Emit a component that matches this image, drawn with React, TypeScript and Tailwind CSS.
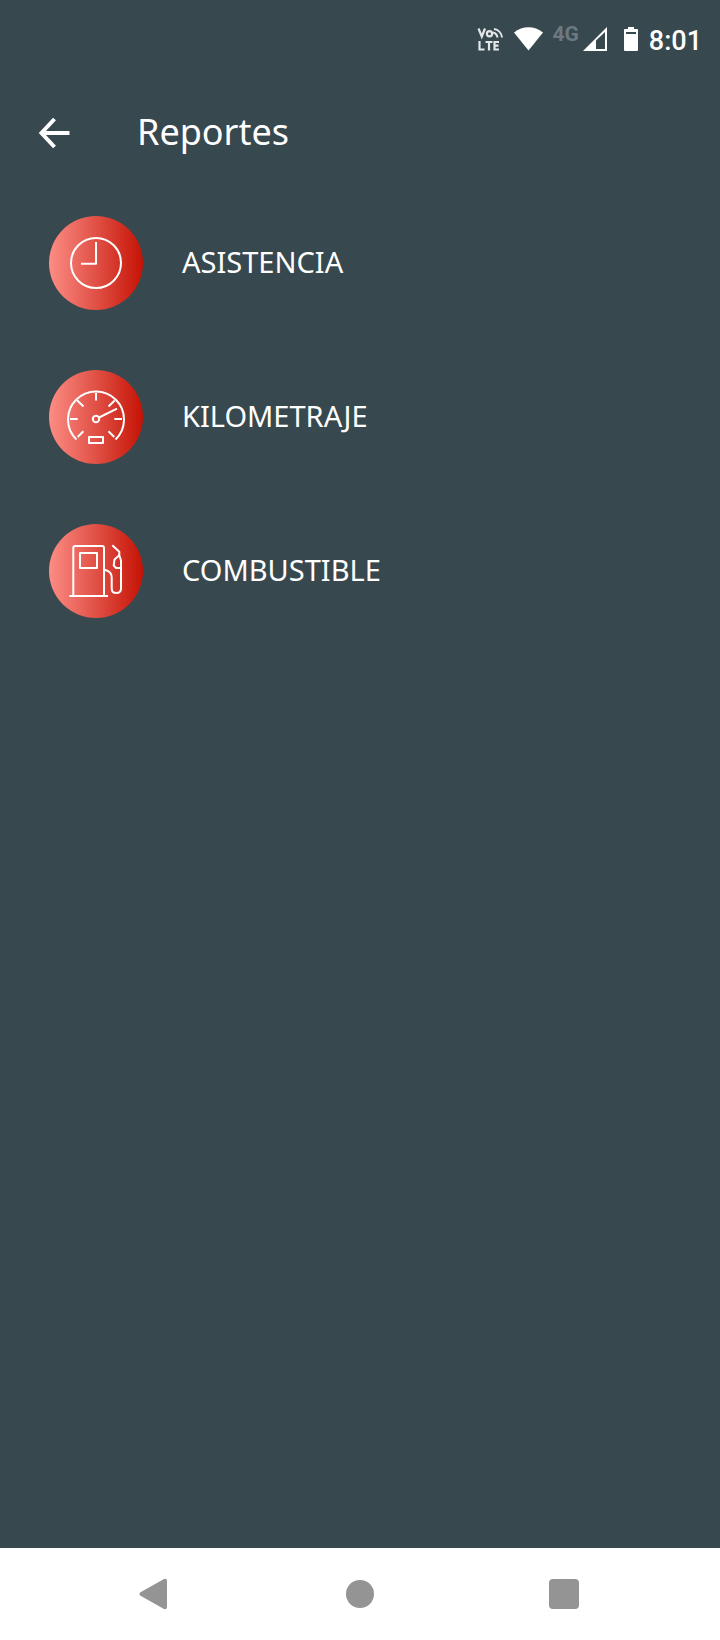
import type { ReactNode } from 'react';

function StatusBar() {
  return (
    <div className="flex h-[78px] items-center justify-end pr-[18px] font-['Roboto','Liberation_Sans',sans-serif]">
      <svg className="h-6 w-7" viewBox="0 0 28 24" fill="none" stroke="#e3e6e7" strokeWidth="2.2" role="img" aria-label="VoLTE">
        <path d="M1.500 1.500 4.800 9.500 8 1.500" />
        <circle cx="12.500" cy="6.700" r="2.600" />
        <path d="M16 5.500a6 6 0 0 1 4.500 5M17 2a9.500 9.500 0 0 1 8 8.500" strokeWidth="2" />
        <path d="M2.500 14v8.500H7.500M8.500 15h7M12 15v8.500M22 15h-4.500v7.500H22M17.500 18.700h4" />
      </svg>
      <svg className="ml-2 h-6 w-8" viewBox="0 0 32 24" fill="#fff" role="img" aria-label="Wi-Fi">
        <path d="M1 5.500C9.500-1.500 21.500-1.500 30 5.500L15.500 23.500Z" />
      </svg>
      <span className="ml-[7px] mb-2.5 text-[21px] leading-6 font-bold text-[#6c7980]">4G</span>
      <svg className="ml-1 h-6 w-6" viewBox="0 0 24 24" role="img" aria-label="Signal">
        <path d="M24 0V24H0Z" fill="#fff" />
        <path d="M22 5V22H13V13.500Z" fill="#38484f" />
      </svg>
      <svg className="ml-4 h-6 w-4" viewBox="0 0 16 24" role="img" aria-label="Battery">
        <path d="M5 0h6v2h3q1 0 1 1v20q0 1-1 1H2q-1 0-1-1V3q0-1 1-1h3Z" fill="#fff" />
        <path d="M3 5h10v2H3Z" fill="#38484f" />
      </svg>
      <span className="ml-2.5 pt-1 text-[27px] leading-8 font-medium">8:01</span>
    </div>
  );
}

function ClockIcon() {
  return (
    <>
      <circle cx="47" cy="47" r="25" />
      <path d="M47 26v21.700H32" />
    </>
  );
}

function GaugeIcon() {
  return (
    <>
      <path d="M27.500 69.500A28 28 0 1 1 66.500 69.500" />
      <path d="M47 23v7.500M21 49h7.700M65.300 49H73M28 30.300l6.500 6.200M65.700 30.500l-6.200 6M28.700 67l5.700-5.700M65.300 67l-5.900-5.700" />
      <circle cx="47" cy="49" r="3.200" />
      <path d="M50 47.500 68 38.700" />
      <path d="M40 67h14v6H40Z" />
    </>
  );
}

function FuelIcon() {
  return (
    <>
      <path d="M24.300 72V24q0-2 2-2H53q2 0 2 2v48M20.300 72H59" />
      <path d="M31 29h17v15H31Z" />
      <path d="M55.500 45.700q7.200 1.500 7.200 7.500V64.500q0 4.500 4.600 4.500t4.700-4.500V36.500L70.300 31.300V27.700L63.300 21.300" />
      <path d="M70.300 31.300 65.500 35.500 64.700 41.500 67 44h5" />
    </>
  );
}

function ReportItem({ label, children }: { label: string; children: ReactNode }) {
  return (
    <li>
      <button type="button" className="flex w-full items-center gap-[39px] px-12 py-[30px] text-left">
        <span className="ml-px size-[94px] shrink-0 rounded-full bg-linear-to-r/srgb from-[#fc8d85] to-[#c51305]">
          <svg className="size-full" viewBox="0 0 94 94" fill="none" stroke="#fff" strokeWidth="2" strokeLinejoin="round" aria-hidden="true">
            {children}
          </svg>
        </span>
        <span className="pb-0.5 text-[29px] leading-10">{label}</span>
      </button>
    </li>
  );
}

export default function App() {
  return (
    <div className="flex min-h-screen flex-col bg-[#38484f] font-['Noto_Sans','Open_Sans',sans-serif] text-white">
      <StatusBar />
      <header className="flex h-[108px] items-center px-9 pt-0.5">
        <button type="button" aria-label="Volver" className="size-9">
          <svg className="size-9" viewBox="0 0 36 36" fill="none" stroke="#fff" strokeWidth="4" aria-hidden="true">
            <path d="M33.500 18H5M18.500 4 5.500 18 18.500 32" />
          </svg>
        </button>
        <h1 className="ml-[65px] pb-0.5 text-4xl leading-12">Reportes</h1>
      </header>
      <main className="flex-1">
        <ul>
          <ReportItem label="ASISTENCIA"><ClockIcon /></ReportItem>
          <ReportItem label="KILOMETRAJE"><GaugeIcon /></ReportItem>
          <ReportItem label="COMBUSTIBLE"><FuelIcon /></ReportItem>
        </ul>
      </main>
      <nav aria-label="Sistema" className="flex h-[92px] items-center justify-between bg-white pr-[141px] pl-[138px]">
        <button type="button" aria-label="Atrás" className="size-8">
          <svg className="size-8" viewBox="0 0 32 32" fill="#949494" stroke="#949494" strokeWidth="4" strokeLinejoin="round" aria-hidden="true">
            <path d="M3.500 16 27 2.800V29.200Z" />
          </svg>
        </button>
        <button type="button" aria-label="Inicio" className="size-7 rounded-full bg-[#949494]" />
        <button type="button" aria-label="Recientes" className="size-[30px] rounded-sm bg-[#949494]" />
      </nav>
    </div>
  );
}
